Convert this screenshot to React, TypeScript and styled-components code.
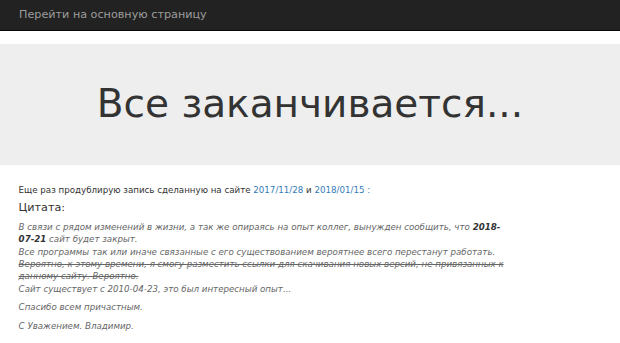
import React from 'react';
import styled, { createGlobalStyle } from 'styled-components';

const GlobalStyle = createGlobalStyle`
  html, body {
    margin: 0;
    padding: 0;
    background: #fff;
  }
  body {
    font-family: "DejaVu Sans", sans-serif;
    font-size: 8.68px;
    line-height: 1.42857;
    color: #333;
  }
`;

export default function App() {
  return (
    <>
      <GlobalStyle />
      <Navbar>
        <Brand href="#">Перейти на основную страницу</Brand>
      </Navbar>
      <Jumbotron>
        <Title>Все заканчивается...</Title>
      </Jumbotron>
      <Container>
        <Intro>
          Еще раз продублирую запись сделанную на сайте <Link href="#">2017/11/28</Link> и{' '}
          <Link href="#">2018/01/15 :</Link>
        </Intro>
        <Heading>Цитата:</Heading>
        <Quote>
          В связи с рядом изменений в жизни, а так же опираясь на опыт коллег, вынужден сообщить, что{' '}
          <Strong>2018-07-21</Strong> сайт будет закрыт.
          <br />
          Все программы так или иначе связанные с его существованием вероятнее всего перестанут работать.
          <br />
          <Struck>
            Вероятно, к этому времени, я смогу разместить ссылки для скачивания новых версий, не привязанных к
            данному сайту. Вероятно.
          </Struck>
          <br />
          Сайт существует с 2010-04-23, это был интересный опыт...
        </Quote>
        <Quote>Спасибо всем причастным.</Quote>
        <Quote>С Уважением. Владимир.</Quote>
      </Container>
    </>
  );
}

const Navbar = styled.nav`
  height: 31px;
  background-color: #222;
  border-bottom: 1px solid #080808;
  box-sizing: border-box;
  display: flex;
  align-items: center;
  padding: 0 19px;
  margin-bottom: 13px;
`;

const Brand = styled.a`
  color: #9d9d9d;
  font-size: 11.2px;
  text-decoration: none;
`;

const Jumbotron = styled.div`
  background-color: #eee;
  height: 121px;
  display: flex;
  align-items: center;
  justify-content: center;
  margin-bottom: 18.6px;
`;

const Title = styled.h1`
  margin: 0;
  font-size: 39px;
  font-weight: 500;
  line-height: 1.1;
  color: #333;
`;

const Container = styled.div`
  padding: 0 18.6px;
`;

const Intro = styled.p`
  margin: 0 0 6.2px;
`;

const Link = styled.a`
  color: #337ab7;
  text-decoration: none;
`;

const Heading = styled.h4`
  margin: 6.2px 0;
  font-size: 11.2px;
  font-weight: 500;
  line-height: 1.1;
  color: #333;
`;

const Quote = styled.p`
  margin: 0 0 6.2px;
  font-style: italic;
  color: #666;
  max-width: 486px;
`;

const Strong = styled.b`
  color: #333;
`;

const Struck = styled.s`
  color: #666;
`;
